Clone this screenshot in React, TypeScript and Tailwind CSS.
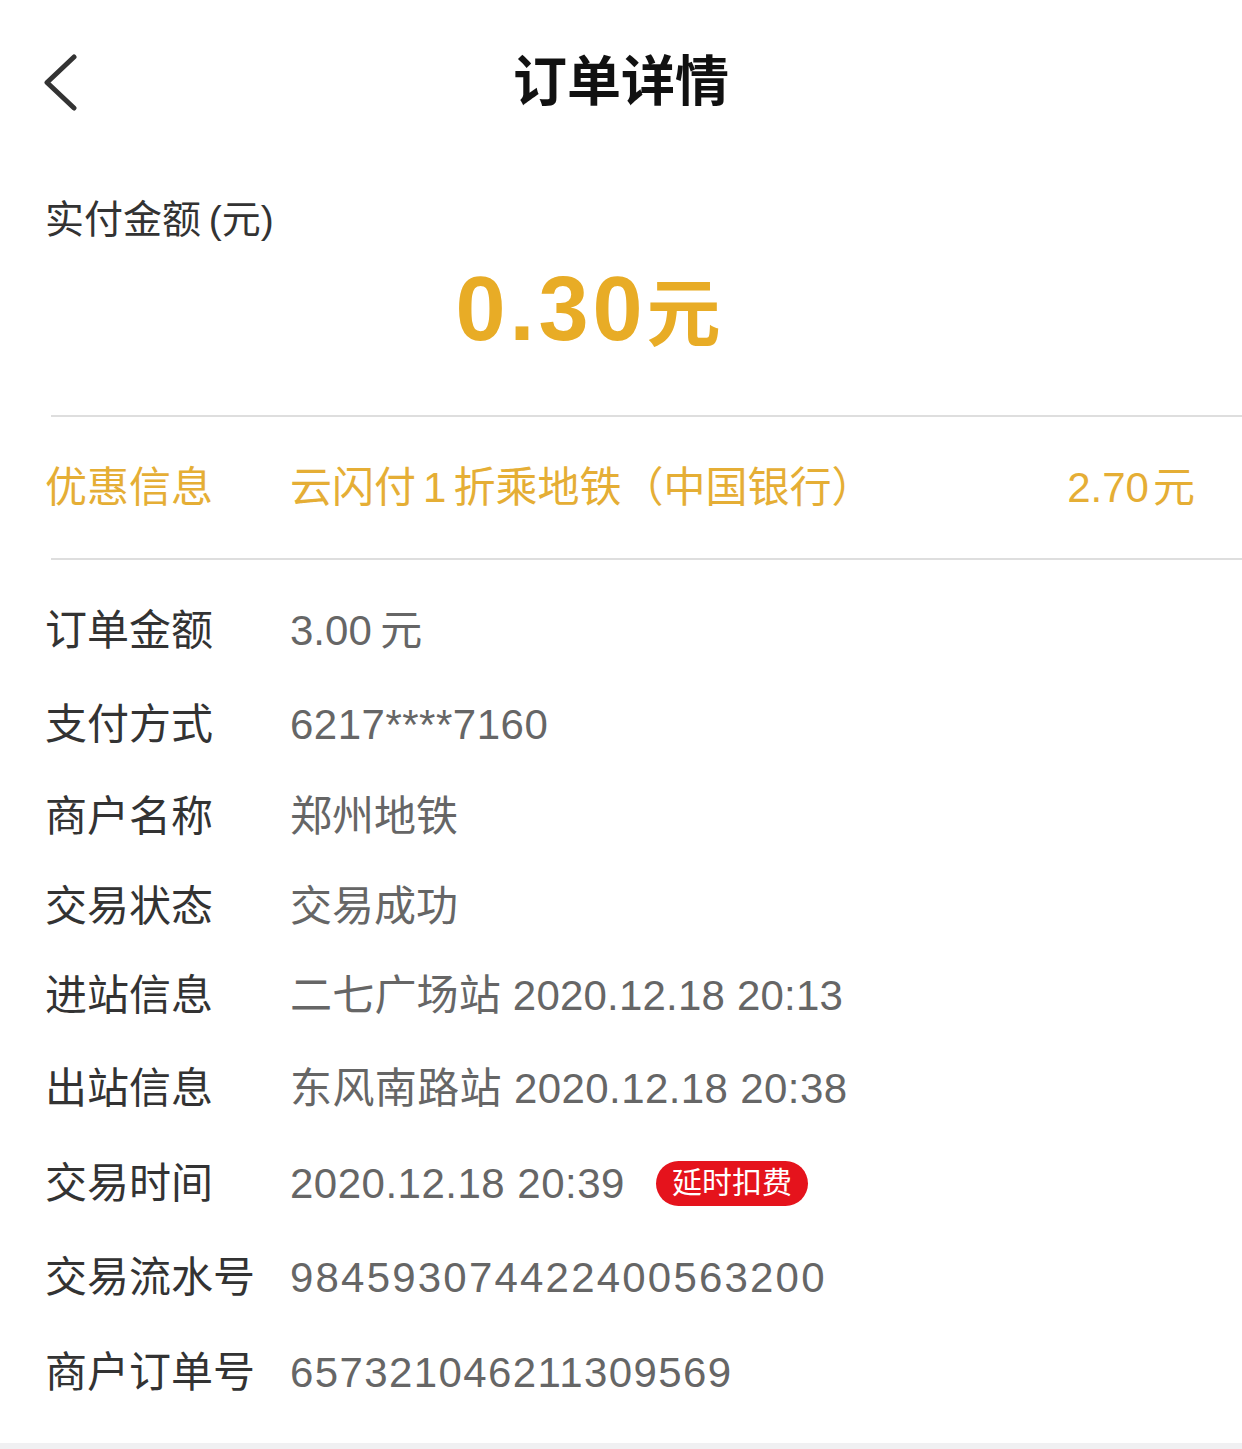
import React from 'react'

interface Row {
  label: string
  value: string
  h: string
  track?: string
  badge?: string
}

const ROWS: Row[] = [
  { label: '订单金额', value: '3.00\u2009元', h: 'h-[94px]' },
  { label: '支付方式', value: '6217****7160', h: 'h-[94px]', track: 'tracking-[0.5px]' },
  { label: '商户名称', value: '郑州地铁', h: 'h-[91px]' },
  { label: '交易状态', value: '交易成功', h: 'h-[88px]' },
  { label: '进站信息', value: '二七广场站 2020.12.18 20:13', h: 'h-[91px]', track: 'tracking-[0.2px]' },
  { label: '出站信息', value: '东风南路站 2020.12.18 20:38', h: 'h-[95px]', track: 'tracking-[0.4px]' },
  { label: '交易时间', value: '2020.12.18 20:39', h: 'h-[94px]', track: 'tracking-[0.5px]', badge: '延时扣费' },
  { label: '交易流水号', value: '984593074422400563200', h: 'h-[95px]', track: 'tracking-[2.2px]' },
  { label: '商户订单号', value: '657321046211309569', h: 'h-[95px]', track: 'tracking-[1.4px]' },
]

function BackIcon() {
  return (
    <svg width="34" height="57" viewBox="0 0 34 57" fill="none">
      <path d="M30 3 L3 28.5 L30 54" stroke="#333" strokeWidth="5" strokeLinecap="round" strokeLinejoin="round" />
    </svg>
  )
}

export default function App() {
  return (
    <div className="w-[1242px] h-[1449px] bg-white flex flex-col font-['Liberation_Sans','Noto_Sans_CJK_SC',sans-serif] overflow-hidden">
      {/* header */}
      <div className="h-[164px] grid grid-cols-[1fr_auto_1fr] items-center">
        <div className="pl-[44px] flex items-center">
          <BackIcon />
        </div>
        <h1 className="text-[54px] font-bold text-[#111] leading-none">订单详情</h1>
        <div />
      </div>

      {/* paid amount */}
      <div className="mt-[32px] pl-[45px] text-[39px] leading-[48px] text-[#333]">实付金额{'\u2009'}(元)</div>
      <div className="mt-[20px] flex justify-center pr-[66px] leading-none text-[#e8ac26] font-bold items-baseline h-[90px]">
        <span className="text-[90px] tracking-[4px]">0.30</span>
        <span className="text-[74px] font-['Noto_Sans_CJK_SC',sans-serif]">元</span>
      </div>

      <div className="mt-[61px] ml-[51px] h-[2px] bg-[#dedede]" />

      {/* discount */}
      <div className="h-[141px] flex items-center pl-[45px] pr-[47px] text-[42px] text-[#e5ae35]">
        <div className="w-[245px] shrink-0">优惠信息</div>
        <div className="flex-1">
          云闪付<span className="mx-[7px]">1</span>折乘地铁（中国银行）
        </div>
        <div>
          2.70<span className="ml-[4px]">元</span>
        </div>
      </div>

      <div className="ml-[51px] h-[2px] bg-[#dedede]" />

      {/* detail rows */}
      <div className="pt-[23px] pl-[45px]">
        {ROWS.map(r => (
          <div key={r.label} className={`${r.h} flex items-center text-[42px]`}>
            <div className="w-[245px] shrink-0 text-[#333]">{r.label}</div>
            <div className={`text-[#666] ${r.track ?? ''}`}>{r.value}</div>
            {r.badge && (
              <span className="ml-[31px] h-[45px] px-[16px] rounded-full bg-[#e5131c] text-white text-[30px] flex items-center leading-none">
                {r.badge}
              </span>
            )}
          </div>
        ))}
      </div>

      <div className="flex-1" />
      <div className="h-[6px] bg-[#f0f0f2]" />
    </div>
  )
}
